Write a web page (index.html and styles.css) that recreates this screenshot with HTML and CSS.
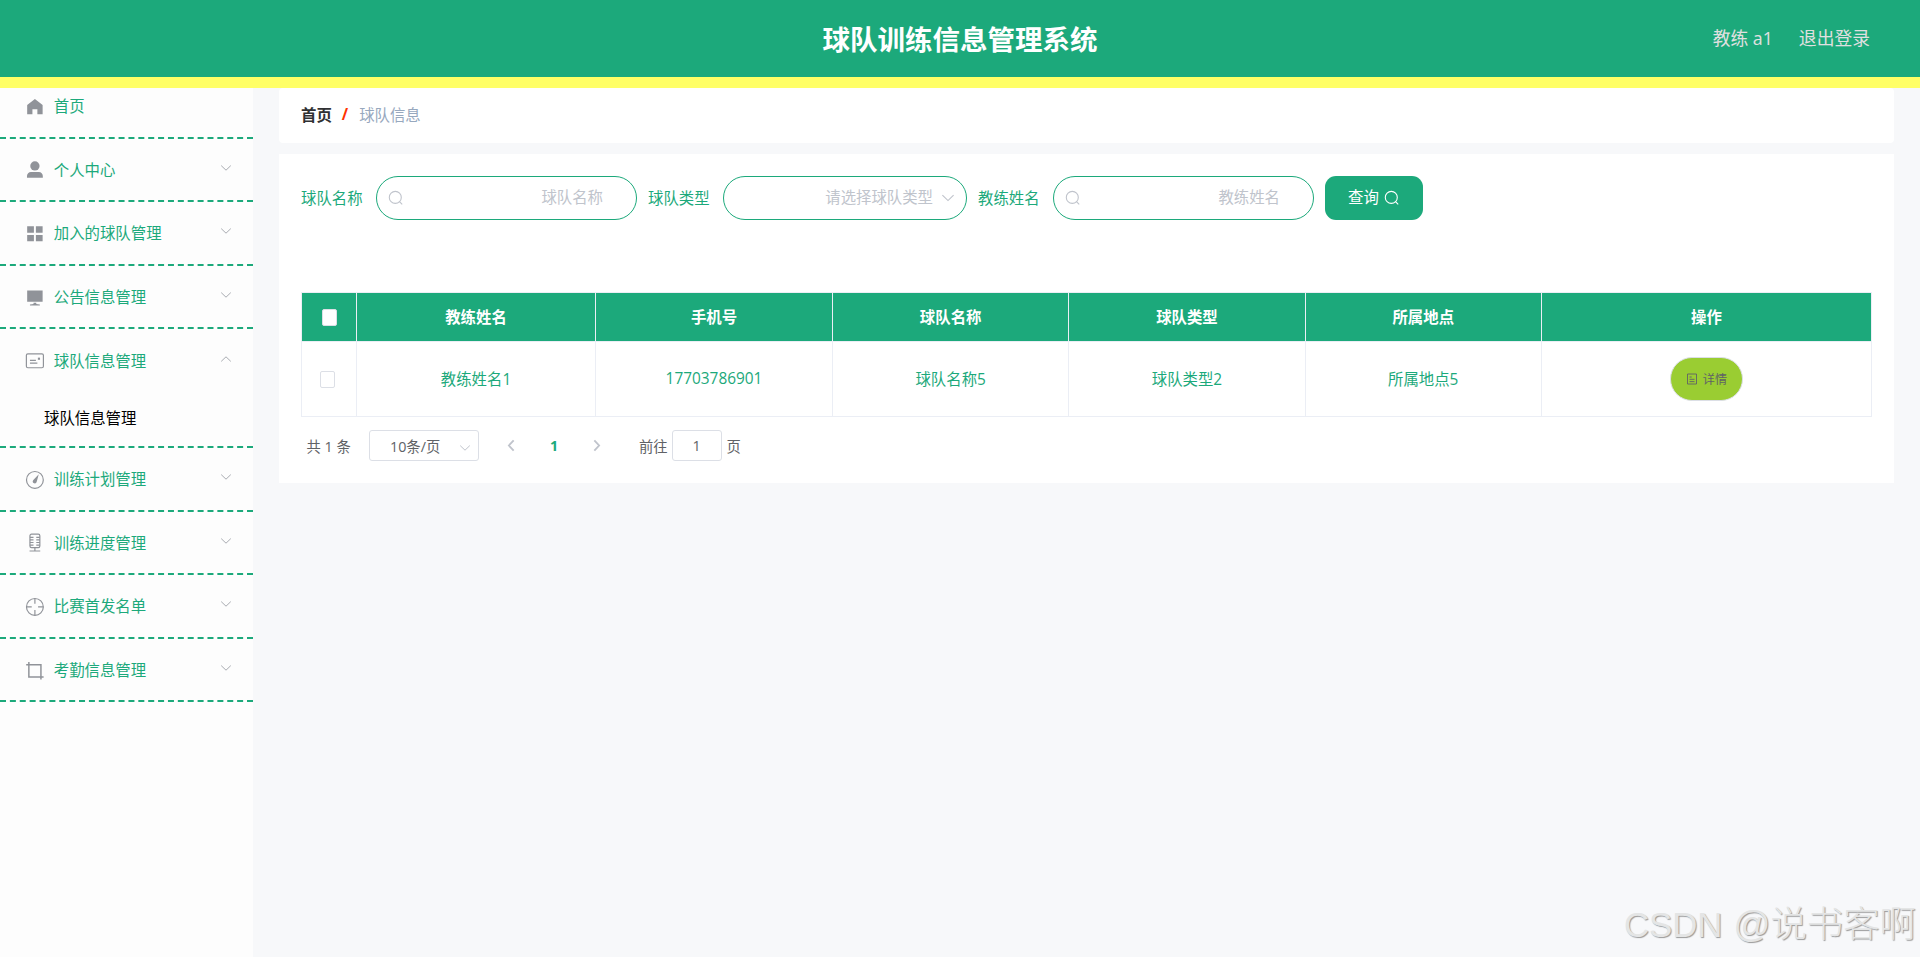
FILE: index.html
```html
<!DOCTYPE html>
<html lang="zh-CN">
<head>
  <meta charset="UTF-8">
  <meta name="viewport" content="width=device-width, initial-scale=1.0">
  <title>球队训练信息管理系统</title>
  <link rel="stylesheet" href="styles.css">
</head>
<body>

  <!-- icons -->
  <svg class="sprite" aria-hidden="true">
    <symbol id="i-down" viewBox="0 0 12 12"><path d="M1.2 3.6 6 8.2l4.8-4.6" fill="none" stroke="currentColor"/></symbol>
    <symbol id="i-left" viewBox="0 0 12 12"><path d="M8 1.2 3.6 6 8 10.8" fill="none" stroke="currentColor" stroke-width="1.7"/></symbol>
    <symbol id="i-search" viewBox="0 0 16 16"><circle cx="7.3" cy="7.4" r="6" fill="none" stroke="currentColor" stroke-width="1.1"/><path d="m11.5 11.6 2.7 2.8" stroke="currentColor" stroke-width="1.1"/></symbol>
  </svg>

  <header class="header">
    <h1 class="title">球队训练信息管理系统</h1>
    <div class="user">
      <span>教练 a1</span>
      <span>退出登录</span>
    </div>
  </header>

  <div class="container">
    <aside class="sidebar">
      <ul class="menu">
        <li class="menu-item">
          <div class="menu-title">
            <svg class="menu-icon" viewBox="0 0 20 20"><path d="M2.2 8.2 10 2l7.8 6.2V17.5h-5.3v-5h-5v5H2.2z" fill="currentColor"/></svg>
            <span>首页</span>
          </div>
        </li>
        <li class="menu-item">
          <div class="menu-title">
            <svg class="menu-icon" viewBox="0 0 20 20"><circle cx="10" cy="6" r="4.7" fill="currentColor"/><path d="M2 18v-1.8c0-2.3 1.7-4 4-4h8c2.3 0 4 1.7 4 4V18z" fill="currentColor"/></svg>
            <span>个人中心</span>
            <svg class="arrow"><use href="#i-down"/></svg>
          </div>
        </li>
        <li class="menu-item">
          <div class="menu-title">
            <svg class="menu-icon" viewBox="0 0 20 20"><path d="M2.2 2.3H9v6.5H2.2zM11 2.3h6.8v6.5H11zM2.2 11H9v6.5H2.2zM11 11h6.8v6.5H11z" fill="currentColor"/></svg>
            <span>加入的球队管理</span>
            <svg class="arrow"><use href="#i-down"/></svg>
          </div>
        </li>
        <li class="menu-item">
          <div class="menu-title">
            <svg class="menu-icon" viewBox="0 0 20 20"><path d="M2.2 2.5h15.6v11.5H2.2zM8.6 15h2.8v1.2l3.6.5v1.1H5v-1.1l3.6-.5z" fill="currentColor"/></svg>
            <span>公告信息管理</span>
            <svg class="arrow"><use href="#i-down"/></svg>
          </div>
        </li>
        <li class="menu-item">
          <div class="menu-title">
            <svg class="menu-icon" viewBox="0 0 20 20"><rect x="1.4" y="2.9" width="17.2" height="14" rx="1.5" fill="none" stroke="currentColor" stroke-width="1.2"/><path d="M5 9.5h6M5 12.3h7.5" stroke="currentColor" stroke-width="1.2"/><path d="M13 6.7h2.2v2.2H13z" fill="currentColor"/></svg>
            <span>球队信息管理</span>
            <svg class="arrow arrow--up"><use href="#i-down"/></svg>
          </div>
          <div class="submenu-item">球队信息管理</div>
        </li>
        <li class="menu-item">
          <div class="menu-title">
            <svg class="menu-icon" viewBox="0 0 20 20"><circle cx="10" cy="10" r="8.5" fill="none" stroke="currentColor" stroke-width="1.2"/><path d="m13.9 4.4-2 7.3c-.4 1.5-1.4 2.3-2.8 1.8-1.4-.6-1.7-2-.9-3.2z" fill="currentColor"/></svg>
            <span>训练计划管理</span>
            <svg class="arrow"><use href="#i-down"/></svg>
          </div>
        </li>
        <li class="menu-item">
          <div class="menu-title">
            <svg class="menu-icon" viewBox="0 0 20 20"><rect x="5" y="1.2" width="10" height="13.6" rx="1.6" fill="none" stroke="currentColor" stroke-width="1.2"/><path d="M5 4.4h3.6M5 7h3.6M5 9.6h3.6M5 12.2h3.6M15 4.4h-3.6M15 7h-3.6M15 9.6h-3.6M15 12.2h-3.6M10 14.8v3.4M4.6 18.2h10.8" stroke="currentColor" stroke-width="1.2"/></svg>
            <span>训练进度管理</span>
            <svg class="arrow"><use href="#i-down"/></svg>
          </div>
        </li>
        <li class="menu-item">
          <div class="menu-title">
            <svg class="menu-icon" viewBox="0 0 20 20"><circle cx="10" cy="10" r="8.5" fill="none" stroke="currentColor" stroke-width="1.2"/><path d="M10 1.5v5.3M10 13.2v5.3M1.5 10h5.3M13.2 10h5.3" stroke="currentColor" stroke-width="1.2"/></svg>
            <span>比赛首发名单</span>
            <svg class="arrow"><use href="#i-down"/></svg>
          </div>
        </li>
        <li class="menu-item">
          <div class="menu-title">
            <svg class="menu-icon" viewBox="0 0 20 20"><path d="M1.2 3.9h14.9v14.9M3.9 1v15.1h14.9" fill="none" stroke="currentColor" stroke-width="1.5"/></svg>
            <span>考勤信息管理</span>
            <svg class="arrow"><use href="#i-down"/></svg>
          </div>
        </li>
      </ul>
    </aside>

    <main class="main">
      <nav class="breadcrumb">
        <b>首页</b>
        <span class="separator">/</span>
        <span class="current">球队信息</span>
      </nav>

      <section class="content">
        <div class="search-form">
          <span class="label">球队名称</span>
          <div class="field">
            <svg class="search-icon"><use href="#i-search"/></svg>
            <span>球队名称</span>
          </div>
          <span class="label">球队类型</span>
          <div class="field field--select">
            <span>请选择球队类型</span>
            <svg class="select-icon"><use href="#i-down"/></svg>
          </div>
          <span class="label">教练姓名</span>
          <div class="field">
            <svg class="search-icon"><use href="#i-search"/></svg>
            <span>教练姓名</span>
          </div>
          <button class="btn-search">查询<svg class="search-icon"><use href="#i-search"/></svg></button>
        </div>

        <table class="table">
          <colgroup>
            <col class="col-check">
            <col class="col-name">
            <col class="col-phone">
            <col class="col-data">
            <col class="col-data">
            <col class="col-data">
            <col>
          </colgroup>
          <thead>
            <tr>
              <th><span class="checkbox"></span></th>
              <th>教练姓名</th>
              <th>手机号</th>
              <th>球队名称</th>
              <th>球队类型</th>
              <th>所属地点</th>
              <th>操作</th>
            </tr>
          </thead>
          <tbody>
            <tr>
              <td class="cell-check"><span class="checkbox"></span></td>
              <td>教练姓名1</td>
              <td>17703786901</td>
              <td>球队名称5</td>
              <td>球队类型2</td>
              <td>所属地点5</td>
              <td class="cell-action">
                <button class="btn-detail">
                  <svg viewBox="0 0 12 12"><path d="M1.5 1h9v10h-9zM3.5 4h2.2M3.5 6.3h5M3.5 8.6h5" fill="none" stroke="currentColor" stroke-width=".9"/></svg>
                  <span>详情</span>
                </button>
              </td>
            </tr>
          </tbody>
        </table>

        <div class="pagination">
          <span class="total">共 1 条</span>
          <div class="page-size">
            <span>10条/页</span>
            <svg><use href="#i-down"/></svg>
          </div>
          <svg class="page-arrow"><use href="#i-left"/></svg>
          <b class="page-number">1</b>
          <svg class="page-arrow page-arrow--next"><use href="#i-left"/></svg>
          <span class="jump">前往</span>
          <div class="page-input">1</div>
          <span>页</span>
        </div>
      </section>
    </main>
  </div>

  <div class="watermark"><span class="watermark-site">CSDN</span> <span>@说书客啊</span></div>

</body>
</html>
```

FILE: styles.css
```css
* {
  box-sizing: border-box;
}

body {
  margin: 0;
  height: 100vh;
  overflow: hidden;
  display: flex;
  flex-direction: column;
  background: #f7f8fa;
  color: #1ca97b;
  font-family: "Open Sans", "Noto Sans CJK SC", sans-serif;
  font-size: 15.4px;
}

svg {
  display: block;
  flex: none;
}

.sprite {
  display: none;
}

/* header */
.header {
  flex: none;
  height: 88px;
  display: grid;
  grid-template-columns: 1fr auto 1fr;
  align-items: center;
  background: #1ca97b;
  border-bottom: 11px solid #ffff66;
}

.title {
  grid-column: 2;
  margin: 0;
  padding-top: 2px;
  color: #fff;
  font-size: 27.5px;
  line-height: 75px;
}

.user {
  display: flex;
  justify-content: flex-end;
  gap: 26px;
  padding: 0 50px 3px 0;
  color: #e0e0e0;
  font-size: 17.8px;
}

.container {
  flex: 1;
  min-height: 0;
  display: flex;
}

/* sidebar */
.sidebar {
  flex: none;
  width: 253px;
  overflow: hidden;
  background: #fdfdfd;
}

.menu {
  list-style: none;
  margin: -13px 0 0;
  padding: 0;
}

.menu-item {
  border-bottom: 2px dashed #1ca97b;
}

.menu-title {
  height: 61.6px;
  display: flex;
  align-items: center;
  padding: 0 21px 0 25.4px;
}

.menu-icon {
  width: 19.8px;
  height: 19.8px;
  margin: 2px 8.6px 0 0;
  color: #909399;
}

.arrow {
  width: 12px;
  height: 12px;
  margin: -3px 0 0 auto;
  color: #a9acb2;
}

.arrow--up {
  transform: rotate(180deg);
}

.submenu-item {
  height: 55px;
  padding-left: 44px;
  line-height: 55px;
  color: #000;
}

/* main */
.main {
  flex: 1;
  padding: 0 26px;
}

.breadcrumb {
  height: 55px;
  display: flex;
  align-items: center;
  padding: 0 22px 2px;
  background: #fff;
  border-radius: 4px;
}

.breadcrumb b {
  color: #303133;
}

.separator {
  margin: 0 11px 0 10px;
  color: #ff3300;
  font-weight: bold;
}

.current {
  color: #97a8be;
}

.content {
  height: 329px;
  margin-top: 11px;
  padding: 22px 22px 0;
  background: #fff;
}

.search-form {
  height: 116px;
  display: flex;
  align-items: flex-start;
  line-height: 44px;
}

.label {
  width: 75px;
  padding-top: 1px;
}

.field {
  width: 261px;
  height: 44px;
  display: flex;
  align-items: center;
  justify-content: space-between;
  margin-right: 11px;
  padding: 0 33px 0 11px;
  border: 1px solid #1ca97b;
  border-radius: 22px;
  color: #c0c4cc;
}

.field--select {
  width: 244px;
  justify-content: flex-end;
  gap: 8px;
  padding: 0 11px 0 16px;
}

.search-icon {
  width: 16px;
  height: 16px;
}

.select-icon {
  width: 14px;
  height: 14px;
}

.btn-search {
  width: 98px;
  height: 44px;
  display: flex;
  align-items: center;
  justify-content: center;
  gap: 5px;
  padding: 0;
  border: none;
  border-radius: 11px;
  background: #1ca97b;
  color: #fff;
  font: inherit;
}

/* table */
.table {
  width: 1571px;
  table-layout: fixed;
  border-collapse: collapse;
  text-align: center;
}

.table th,
.table td {
  padding: 0 0 2px;
  border: 1px solid #ebeef5;
}

.table th {
  height: 49px;
  background: #1ca97b;
  color: #fff;
}

.table td {
  height: 75px;
}

.col-check {
  width: 55px;
}

.col-name {
  width: 239px;
}

.col-phone {
  width: 237px;
}

.col-data {
  width: 236.3px;
}

.checkbox {
  display: inline-block;
  width: 15px;
  height: 17px;
  border: 1px solid #dcdfe6;
  border-radius: 2px;
  background: #fff;
  vertical-align: middle;
}

.table .cell-check {
  padding-right: 4px;
}

.table .cell-action {
  padding: 0;
}

.btn-detail {
  width: 73px;
  height: 44px;
  display: flex;
  align-items: center;
  justify-content: center;
  gap: 5px;
  margin: 0 auto;
  padding: 0;
  border: 1px solid #dcdfe6;
  border-radius: 22px;
  background: #9acd32;
  color: #606266;
  font: inherit;
  font-size: 12.1px;
}

.btn-detail svg {
  width: 12px;
  height: 12px;
}

/* pagination */
.pagination {
  display: flex;
  align-items: center;
  margin-top: 13px;
  padding-left: 5.5px;
  color: #606266;
  font-size: 14.3px;
}

.total {
  width: 62.5px;
}

.page-size {
  width: 110px;
  height: 31px;
  display: flex;
  align-items: center;
  justify-content: space-between;
  padding: 0 7px 0 20px;
  border: 1px solid #dcdfe6;
  border-radius: 3px;
}

.page-size svg {
  width: 12px;
  height: 12px;
  margin-top: 4px;
  color: #c0c4cc;
}

.page-arrow {
  width: 13px;
  height: 13px;
  margin-left: 26px;
  color: #c0c4cc;
}

.page-arrow--next {
  margin-left: 0;
  transform: rotate(180deg);
}

.page-number {
  width: 72px;
  color: #1ca97b;
  text-align: center;
}

.jump {
  margin-left: 36px;
}

.page-input {
  width: 50px;
  height: 31px;
  margin: 0 5px 0 4px;
  border: 1px solid #dcdfe6;
  border-radius: 3px;
  line-height: 29px;
  text-align: center;
}

.watermark {
  position: absolute;
  right: 4px;
  bottom: 7px;
  display: flex;
  align-items: baseline;
  gap: 11px;
  color: #e4e5e5;
  font-family: "Liberation Sans", "Noto Sans CJK SC", sans-serif;
  font-size: 36.4px;
  font-weight: 300;
  line-height: 50px;
  text-shadow: 1px 1px 1px #999;
}

.watermark-site {
  font-size: 34.8px;
}
```
